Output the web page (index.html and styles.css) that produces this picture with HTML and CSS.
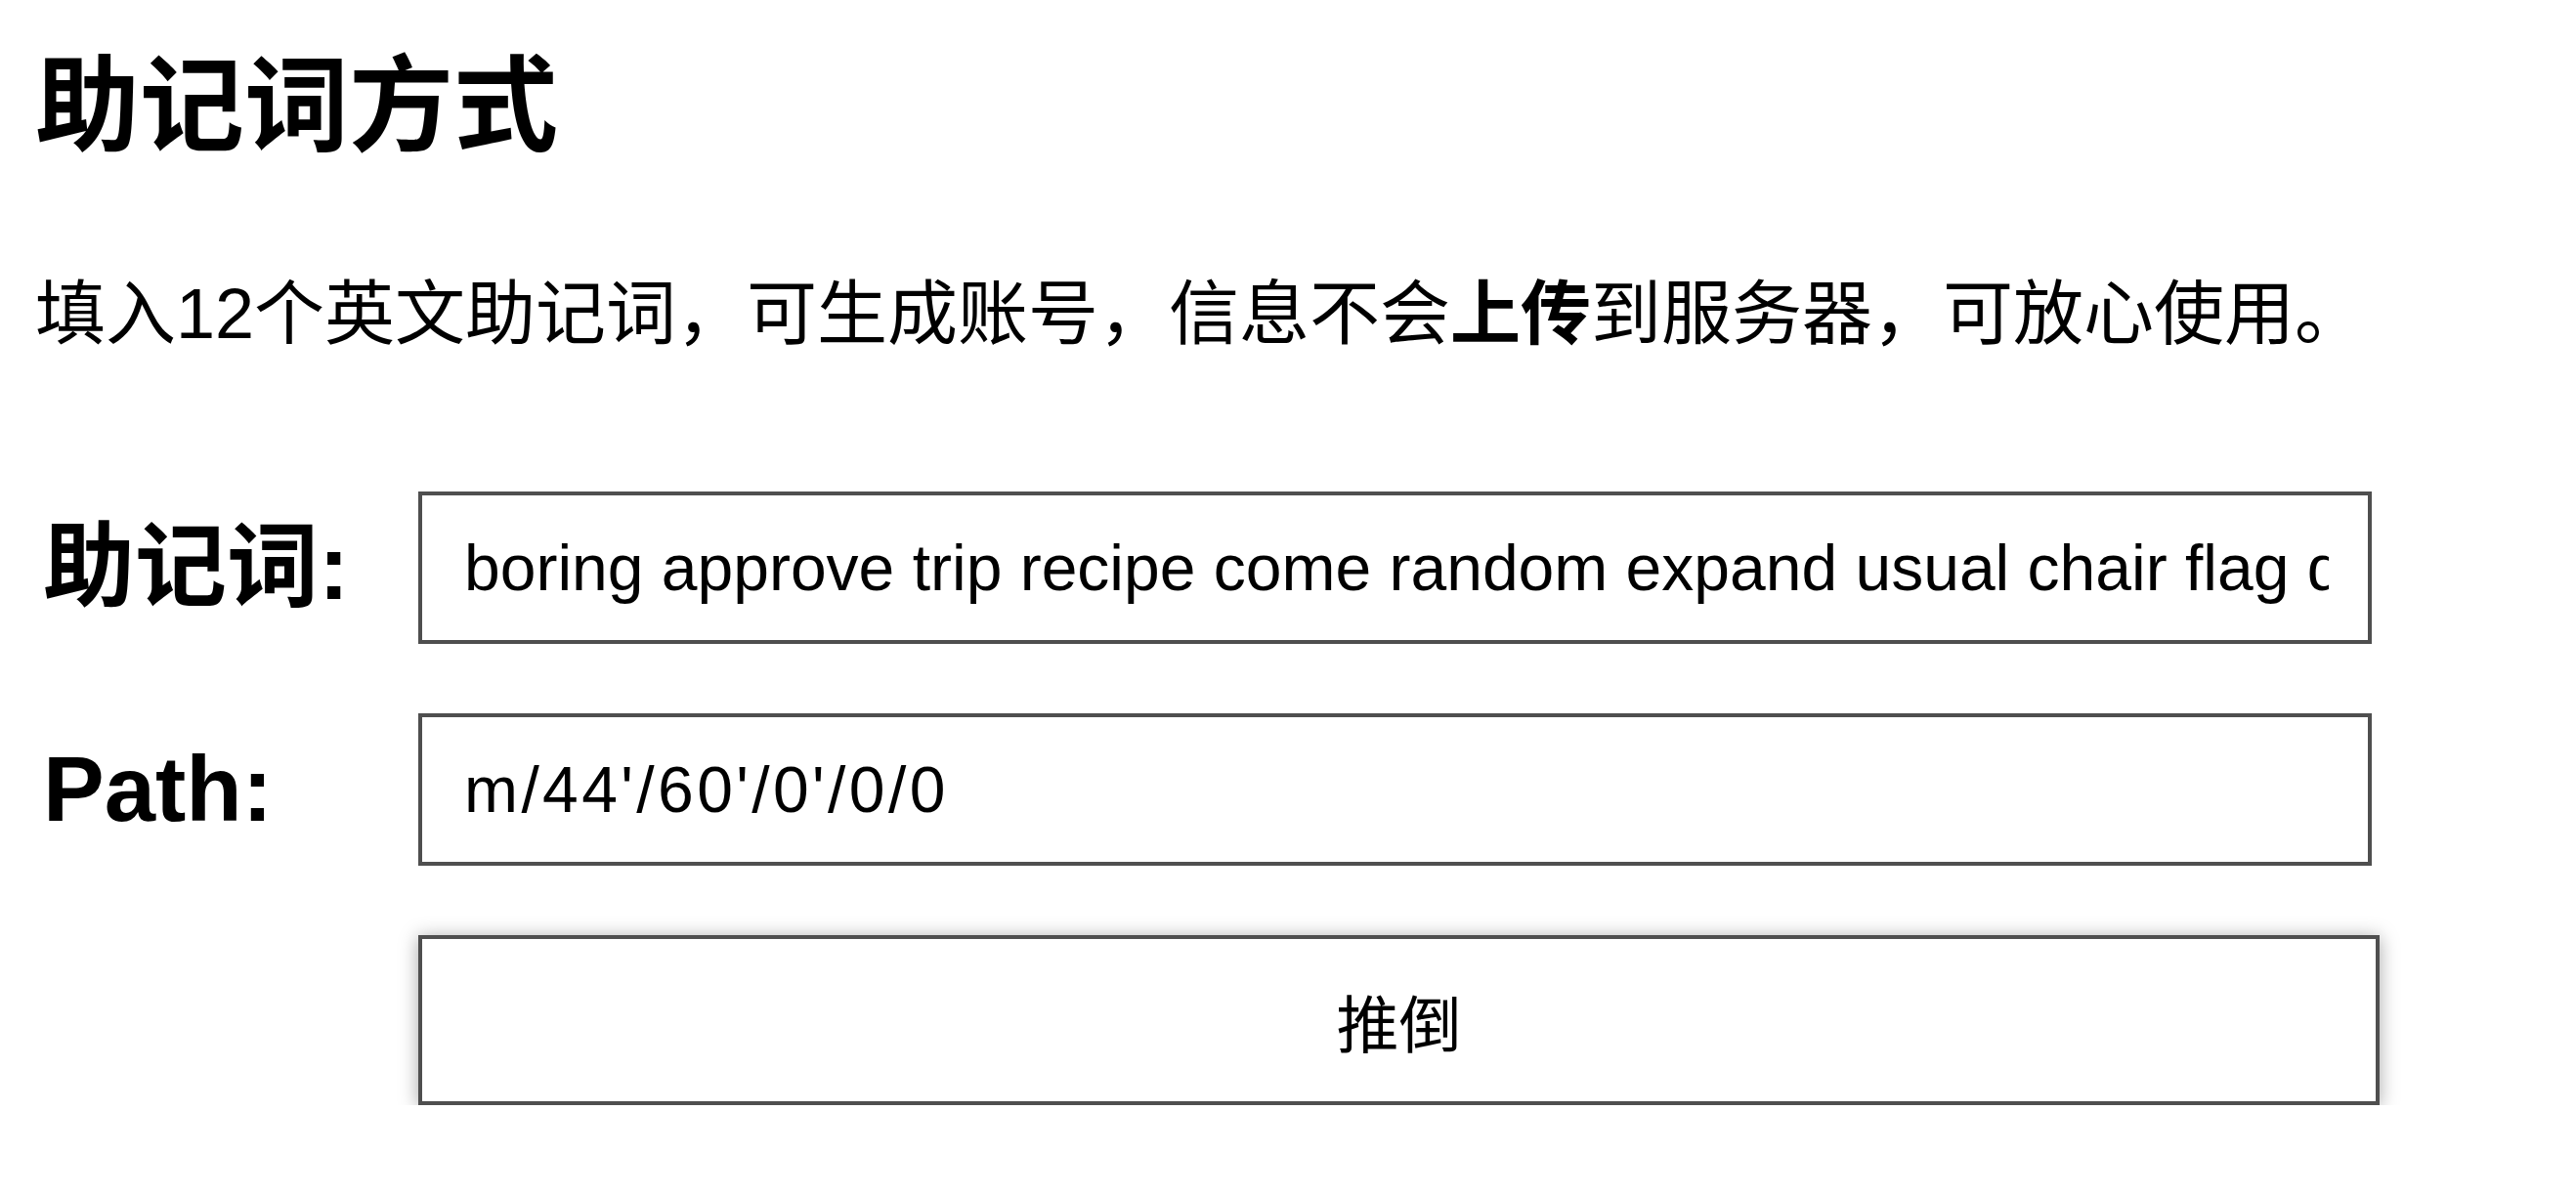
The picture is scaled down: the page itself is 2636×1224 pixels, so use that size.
FILE: index.html
```html
<!DOCTYPE html>
<html lang="zh-CN">
<head>
<meta charset="utf-8">
<title>助记词方式</title>
<link rel="stylesheet" href="styles.css">
</head>
<body>
<main class="page">
  <h1 class="title">助记词方式</h1>
  <p class="desc">填入12个英文助记词，可生成账号，信息不会<strong>上传</strong>到服务器，可放心使用。</p>
  <form class="form">
    <label class="label" for="mnemonic">助记词:</label>
    <input class="field" id="mnemonic" type="text" value="boring approve trip recipe come random expand usual chair flag door silent">
    <label class="label" for="path">Path:</label>
    <input class="field field-path" id="path" type="text" value="m/44'/60'/0'/0/0">
    <span class="spacer"></span>
    <button class="submit" type="button">推倒</button>
  </form>
</main>
</body>
</html>
```
FILE: styles.css
```css
html, body {
  margin: 0;
  padding: 0;
  background: #ffffff;
}

body {
  font-family: "Liberation Sans", "Noto Sans CJK SC", sans-serif;
  color: #000000;
}

.page {
  padding: 45px 36px 0 36px;
}

.title {
  margin: 0;
  font-size: 107px;
  line-height: 1.2;
  font-weight: 700;
}

.desc {
  margin: 105px 0 0 0;
  font-size: 72px;
  line-height: 1.2;
}

.desc strong {
  font-weight: 700;
}

.form {
  margin-top: 138px;
  display: grid;
  grid-template-columns: 392px 1999px;
  row-gap: 71px;
  align-items: center;
}

.label {
  font-size: 94px;
  font-weight: 700;
  line-height: 1.1;
  padding-left: 8px;
}

.field {
  box-sizing: border-box;
  width: 100%;
  height: 156px;
  margin: 0;
  padding: 0 40px 0 43px;
  border: 4px solid #4f4f4f;
  border-radius: 0;
  background: #ffffff;
  color: #000000;
  font-family: "Liberation Sans", "Noto Sans CJK SC", sans-serif;
  font-size: 66px;
  outline: none;
}

.field-path {
  letter-spacing: 3.4px;
}

.submit {
  box-sizing: border-box;
  width: 2007px;
  height: 174px;
  margin: 0;
  padding: 0;
  border: 4px solid #4f4f4f;
  border-radius: 0;
  background: #ffffff;
  color: #000000;
  font-family: "Noto Sans CJK SC", "Liberation Sans", sans-serif;
  font-size: 64px;
  box-shadow: 0 2px 18px rgba(0, 0, 0, 0.35);
  cursor: pointer;
}
```
